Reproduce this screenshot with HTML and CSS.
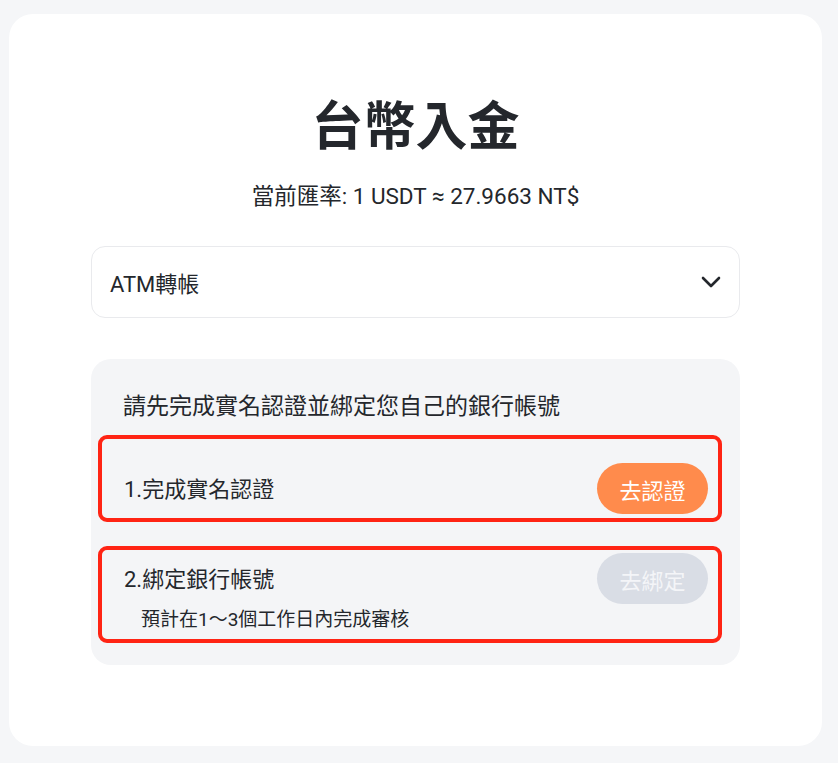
FILE: index.html
```html
<!DOCTYPE html>
<html lang="zh-Hant">
<head>
  <meta charset="UTF-8">
  <meta name="viewport" content="width=device-width, initial-scale=1.0">
  <title>台幣入金</title>
  <link rel="stylesheet" href="styles.css">
</head>
<body>
  <div class="card">
    <h1 class="title">台幣入金</h1>
    <p class="rate">當前匯率: 1 USDT ≈ 27.9663 NT$</p>

    <div class="select">
      <span>ATM轉帳</span>
      <svg class="chevron" width="20" height="12" viewBox="0 0 20 12">
        <path d="M2 2 L10 10 L18 2" fill="none" stroke="#24272c" stroke-width="2.6" stroke-linecap="round" stroke-linejoin="round"/>
      </svg>
    </div>

    <div class="panel">
      <p class="panel-head">請先完成實名認證並綁定您自己的銀行帳號</p>

      <div class="step step-1">
        <div class="step-row">
          <span class="step-name">1.完成實名認證</span>
          <button class="btn btn-active">去認證</button>
        </div>
      </div>

      <div class="step step-2">
        <div class="step-row">
          <span class="step-name">2.綁定銀行帳號</span>
          <button class="btn btn-off">去綁定</button>
        </div>
        <p class="step-note">預計在1～3個工作日內完成審核</p>
      </div>
    </div>
  </div>
</body>
</html>
```

FILE: styles.css
```css
html,body {
  margin: 0;
  padding: 0;
}
body {
  background-color: #f5f6f8;
  font-family: Roboto, "Noto Sans CJK TC", sans-serif;
  color: #24272c;
}
.card {
  box-sizing: border-box;
  width: 813px;
  height: 732px;
  margin: 14px 0 0 9px;
  padding: 78px 82px 0;
  background-color: #fff;
  border-radius: 24px;
}
.title {
  margin: 0;
  font-size: 52px;
  line-height: 72px;
  font-weight: 700;
  text-align: center;
}
.rate {
  margin: 18px 0 0;
  font-size: 22.5px;
  line-height: 28px;
  text-align: center;
}
.select {
  box-sizing: border-box;
  height: 72px;
  margin-top: 36px;
  padding: 0 18px;
  border: 1px solid #e9eaed;
  border-radius: 14px;

  display: flex;
  align-items: center;
  justify-content: space-between;
  font-size: 22px;
}
.panel {
  box-sizing: border-box;
  height: 306px;
  margin-top: 41px;
  padding: 34px 18px 0 7px;
  background-color: #f4f5f7;
  border-radius: 20px;
}
.panel-head {
  margin: 0 0 14px 25px;
  font-size: 23px;
  line-height: 28px;
}
.step {
  border: 4px solid #ff2414;
  border-radius: 9px;
  padding: 0 10px 0 22px;
}
.step-1 {
  padding-top: 24px;
  padding-bottom: 4px;
}
.step-2 {
  margin-top: 24px;
  padding-top: 3px;
  padding-bottom: 6px;
}
.step-row {
  display: flex;
  align-items: center;
  justify-content: space-between;
}
.step-name {
  font-size: 22px;
  margin-top: -3px;
}
.step-note {
  margin: 3px 0 0 17px;
  font-size: 19px;
  line-height: 26px;
}
.btn {
  width: 111px;
  height: 51px;
  border: none;
  border-radius: 26px;
  font-family: inherit;
  font-size: 22px;
  color: #fff;
  padding: 0;
}
.btn-active {
  background-color: #ff8b4c;
}
.btn-off {
  background-color: #d9dde5;
  color: #f4f5f8;
}
```
